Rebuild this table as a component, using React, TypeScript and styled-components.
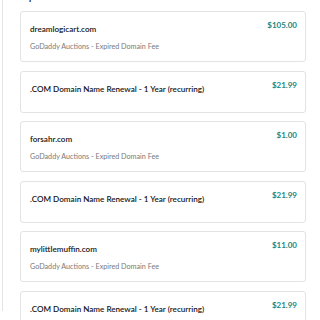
import React from "react";
import styled, { createGlobalStyle } from "styled-components";

const GlobalStyle = createGlobalStyle`
  html, body {
    margin: 0;
    padding: 0;
    background: #ffffff;
  }
  body {
    font-family: "Lato", "Liberation Sans", sans-serif;
    color: #111111;
    overflow: hidden;
  }
`;

const Page = styled.div`
  width: 320px;
  height: 320px;
  padding-left: 2px;
  box-sizing: border-box;
  overflow: hidden;
`;

const Panel = styled.section`
  height: 100%;
  border-left: 1px solid #e4e4e4;
  padding: 0 14px 0 17px;
  box-sizing: border-box;
`;

// section title sits above the fold, only its descender peeks in
const Heading = styled.h2`
  margin: -9px 0 0 9px;
  height: 12px;
  font-size: 9px;
  font-weight: 700;
  line-height: 12px;
  color: #222222;
  overflow: hidden;
`;

const List = styled.ul`
  list-style: none;
  margin: 0;
  padding: 8px 0 0;
  display: flex;
  flex-direction: column;
  gap: 8.5px;
`;

const Card = styled.li<{ $tall: boolean }>`
  display: flex;
  justify-content: space-between;
  align-items: flex-start;
  height: ${(p) => (p.$tall ? "51px" : "42px")};
  box-sizing: border-box;
  padding: 8px 8px 0 9px;
  border: 1px solid #e3e3e3;
  border-radius: 3px;
  background: #ffffff;
`;

const Info = styled.div`
  display: flex;
  flex-direction: column;
  padding-top: 4px;
`;

const Name = styled.span`
  font-size: 8.1px;
  line-height: 10px;
  font-weight: 600;
  color: #151515;
`;

const Sub = styled.span`
  margin-top: 8px;
  font-size: 7.2px;
  line-height: 9px;
  color: #7a7a7a;
`;

const Price = styled.span`
  font-size: 8px;
  line-height: 10px;
  font-weight: 700;
  color: #1a8781;
`;

type Item = { name: string; sub?: string; price: string };

const items: Item[] = [
  { name: "dreamlogicart.com", sub: "GoDaddy Auctions - Expired Domain Fee", price: "$105.00" },
  { name: ".COM Domain Name Renewal - 1 Year (recurring)", price: "$21.99" },
  { name: "forsahr.com", sub: "GoDaddy Auctions - Expired Domain Fee", price: "$1.00" },
  { name: ".COM Domain Name Renewal - 1 Year (recurring)", price: "$21.99" },
  { name: "mylittlemuffin.com", sub: "GoDaddy Auctions - Expired Domain Fee", price: "$11.00" },
  { name: ".COM Domain Name Renewal - 1 Year (recurring)", price: "$21.99" },
];

const App = () => {
  return (
    <Page>
      <GlobalStyle />
      <Panel>
        <Heading>p</Heading>
        <List>
          {items.map((item, i) => (
            <Card key={i} $tall={!!item.sub}>
              <Info>
                <Name>{item.name}</Name>
                {item.sub && <Sub>{item.sub}</Sub>}
              </Info>
              <Price>{item.price}</Price>
            </Card>
          ))}
        </List>
      </Panel>
    </Page>
  );
};

export default App;
